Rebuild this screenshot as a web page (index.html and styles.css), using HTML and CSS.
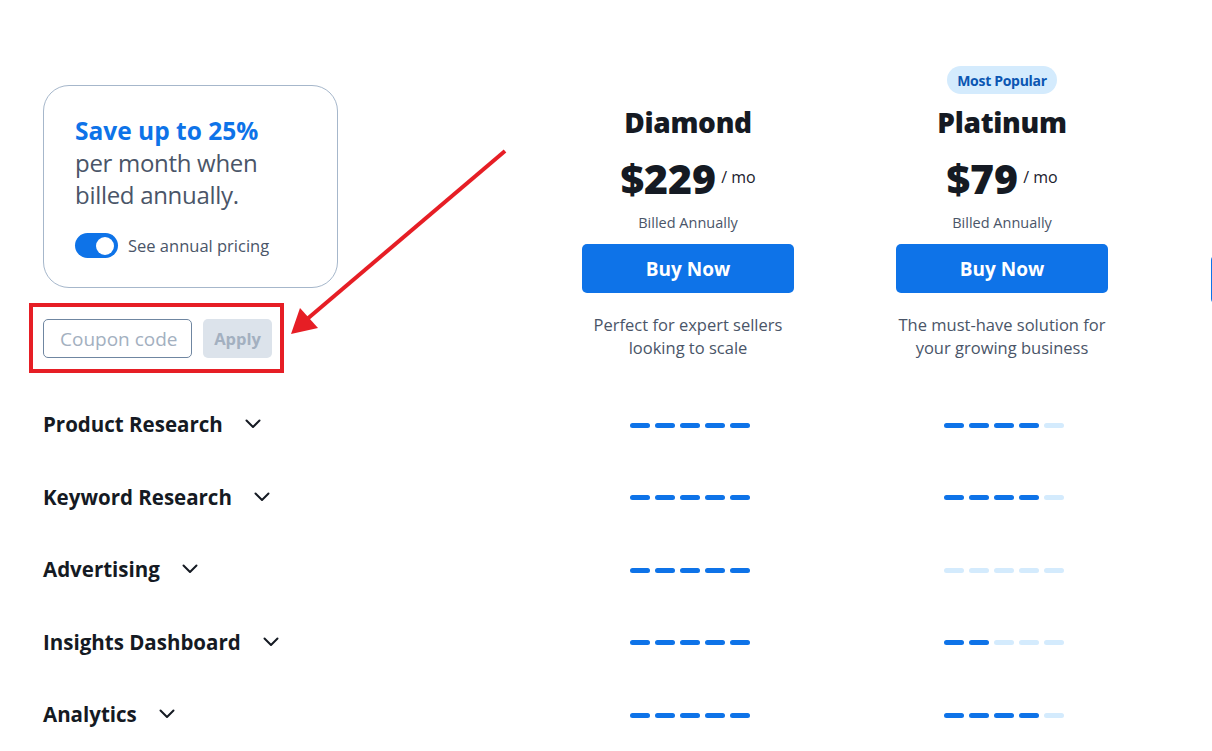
FILE: index.html
```html
<!DOCTYPE html>
<html lang="en">
<head>
<meta charset="utf-8">
<title>Pricing</title>
<link rel="stylesheet" href="styles.css">
</head>
<body>
<div class="page">
  <div class="grid">
    <aside class="intro">
      <div class="save-card">
        <p class="save-title">Save up to 25%</p>
        <p class="save-text">per month when<br>billed annually.</p>
        <label class="toggle-row">
          <span class="toggle"><span class="knob"></span></span>
          <span class="toggle-label">See annual pricing</span>
        </label>
      </div>
      <div class="coupon">
        <input class="coupon-input" type="text" placeholder="Coupon code">
        <button class="apply" type="button">Apply</button>
        <span class="annot-box"></span>
      </div>
    </aside>

    <div class="plan">
      <div class="badge-slot"></div>
      <h2 class="plan-name">Diamond</h2>
      <div class="price"><span class="amount">$229</span><span class="per">/ mo</span></div>
      <div class="billed">Billed Annually</div>
      <button class="buy" type="button">Buy Now</button>
      <p class="desc">Perfect for expert sellers<br>looking to scale</p>
    </div>

    <div class="plan">
      <div class="badge-slot"><span class="badge">Most Popular</span></div>
      <h2 class="plan-name">Platinum</h2>
      <div class="price"><span class="amount">$79</span><span class="per">/ mo</span></div>
      <div class="billed">Billed Annually</div>
      <button class="buy" type="button">Buy Now</button>
      <p class="desc">The must-have solution for<br>your growing business</p>
    </div>

    <div class="plan plan-next">
      <button class="buy" type="button" aria-label="Buy Now"></button>
    </div>

    <div class="feature"><span>Product Research</span><svg class="chev" viewBox="0 0 16 10"><path d="M1.5 1.5 8 8 14.5 1.5"/></svg></div>
    <div class="meter"><i class="on"></i><i class="on"></i><i class="on"></i><i class="on"></i><i class="on"></i></div>
    <div class="meter"><i class="on"></i><i class="on"></i><i class="on"></i><i class="on"></i><i></i></div>
    <div class="meter"></div>

    <div class="feature"><span>Keyword Research</span><svg class="chev" viewBox="0 0 16 10"><path d="M1.5 1.5 8 8 14.5 1.5"/></svg></div>
    <div class="meter"><i class="on"></i><i class="on"></i><i class="on"></i><i class="on"></i><i class="on"></i></div>
    <div class="meter"><i class="on"></i><i class="on"></i><i class="on"></i><i class="on"></i><i></i></div>
    <div class="meter"></div>

    <div class="feature"><span>Advertising</span><svg class="chev" viewBox="0 0 16 10"><path d="M1.5 1.5 8 8 14.5 1.5"/></svg></div>
    <div class="meter"><i class="on"></i><i class="on"></i><i class="on"></i><i class="on"></i><i class="on"></i></div>
    <div class="meter"><i></i><i></i><i></i><i></i><i></i></div>
    <div class="meter"></div>

    <div class="feature"><span>Insights Dashboard</span><svg class="chev" viewBox="0 0 16 10"><path d="M1.5 1.5 8 8 14.5 1.5"/></svg></div>
    <div class="meter"><i class="on"></i><i class="on"></i><i class="on"></i><i class="on"></i><i class="on"></i></div>
    <div class="meter"><i class="on"></i><i class="on"></i><i></i><i></i><i></i></div>
    <div class="meter"></div>

    <div class="feature"><span>Analytics</span><svg class="chev" viewBox="0 0 16 10"><path d="M1.5 1.5 8 8 14.5 1.5"/></svg></div>
    <div class="meter"><i class="on"></i><i class="on"></i><i class="on"></i><i class="on"></i><i class="on"></i></div>
    <div class="meter"><i class="on"></i><i class="on"></i><i class="on"></i><i class="on"></i><i></i></div>
    <div class="meter"></div>
  </div>

  <svg class="arrow" viewBox="0 0 1212 751" aria-hidden="true">
    <line x1="505" y1="151" x2="306" y2="320"/>
    <polygon points="291,334 300,308 318,328"/>
  </svg>
</div>
</body>
</html>
```

FILE: styles.css
```css
* { box-sizing: border-box; }

html, body {
  margin: 0;
  padding: 0;
  background: #ffffff;
  overflow: hidden;
}

body {
  font-family: "Open Sans", "Noto Sans", sans-serif;
  color: #1a202c;
  width: 1212px;
  height: 751px;
}

.page {
  position: relative;
  width: 1212px;
  height: 751px;
  overflow: hidden;
}

.grid {
  display: grid;
  grid-template-columns: 488px 314px 314px 314px;
  grid-template-rows: 322px repeat(5, 72.5px);
  padding: 66px 0 0 43px;
  width: 1600px;
}

/* ---------- intro / left column ---------- */
.intro {
  margin-top: 19px;
  width: 295px;
}

.save-card {
  border: 1px solid #a6b7cb;
  border-radius: 26px;
  padding: 29px 6px 30px 31px;
  height: 203px;
}

.save-title {
  margin: 0;
  font-size: 24.5px;
  line-height: 32px;
  font-weight: 700;
  color: #0e73e8;
}

.save-text {
  margin: 0;
  font-size: 24px;
  line-height: 32px;
  color: #4a5568;
  letter-spacing: -0.3px;
}

.toggle-row {
  display: flex;
  align-items: center;
  gap: 10px;
  margin-top: 22px;
}

.toggle {
  display: flex;
  align-items: center;
  justify-content: flex-end;
  width: 43px;
  height: 25px;
  padding: 0 4px;
  border-radius: 13px;
  background: #0e73e8;
}

.knob {
  width: 18px;
  height: 18px;
  border-radius: 50%;
  background: #ffffff;
}

.toggle-label {
  font-size: 16.5px;
  color: #4a5568;
}

.coupon {
  position: relative;
  display: flex;
  gap: 11px;
  margin-top: 31px;
}

.coupon-input {
  width: 149px;
  height: 39px;
  border: 1px solid #6f86a1;
  border-radius: 5px;
  padding: 0 0 0 16px;
  font-family: inherit;
  font-size: 19px;
  color: #4a5568;
  background: #fff;
}

.coupon-input::placeholder { color: #a3b0c0; }

.apply {
  width: 69px;
  height: 39px;
  border: 0;
  border-radius: 5px;
  background: #dce3eb;
  color: #a3b0c0;
  font-family: inherit;
  font-size: 16.5px;
  font-weight: 700;
  padding: 0;
}

.annot-box {
  position: absolute;
  left: -14px;
  top: -16px;
  width: 255px;
  height: 70px;
  border: 4px solid #e61e25;
  pointer-events: none;
}

/* ---------- plan columns ---------- */
.plan {
  display: flex;
  flex-direction: column;
  align-items: center;
}

.plan-next { padding: 178px 0 0 2px; }

.badge-slot {
  height: 28px;
  display: flex;
  justify-content: center;
}

.badge {
  display: inline-flex;
  align-items: center;
  justify-content: center;
  width: 110px;
  height: 28px;
  border-radius: 14px;
  background: #d4ebfd;
  color: #0b56b2;
  font-size: 14px;
  font-weight: 700;
  letter-spacing: -0.3px;
}

.plan-name {
  margin: 11px 0 0;
  font-size: 28px;
  line-height: 34px;
  font-weight: 800;
  color: #151a23;
  letter-spacing: -0.3px;
}

.price {
  display: flex;
  align-items: center;
  gap: 5px;
  margin-top: 15px;
  height: 48px;
}

.amount {
  font-size: 41px;
  font-weight: 800;
  line-height: 48px;
  color: #151a23;
}

.per {
  font-size: 16px;
  color: #1a202c;
  margin-top: -2px;
}

.billed {
  margin-top: 11px;
  font-size: 14.5px;
  line-height: 20px;
  color: #4a5568;
}

.buy {
  margin-top: 11px;
  width: 212px;
  height: 49px;
  border: 0;
  border-radius: 5px;
  background: #0e73e8;
  color: #ffffff;
  font-family: inherit;
  font-size: 19px;
  font-weight: 700;
}

.desc {
  margin: 20px 0 0;
  font-size: 16.5px;
  line-height: 23px;
  text-align: center;
  color: #4a5568;
}

/* ---------- feature rows ---------- */
.feature {
  display: flex;
  align-items: center;
  gap: 22px;
  font-size: 20.5px;
  font-weight: 700;
  color: #151a23;
}

.chev {
  width: 16px;
  height: 10px;
  fill: none;
  stroke: #151a23;
  stroke-width: 2;
  stroke-linecap: round;
  stroke-linejoin: round;
}

.meter {
  display: flex;
  align-items: center;
  justify-content: center;
  gap: 5px;
  padding: 2px 0 0 3px;
}

.meter i {
  display: block;
  width: 20px;
  height: 5px;
  border-radius: 3px;
  background: #d4ebfd;
}

.meter i.on { background: #0e73e8; }

/* ---------- annotation arrow ---------- */
.arrow {
  position: absolute;
  left: 0;
  top: 0;
  width: 1212px;
  height: 751px;
  pointer-events: none;
}

.arrow line {
  stroke: #e61e25;
  stroke-width: 4;
}

.arrow polygon { fill: #e61e25; }
```
